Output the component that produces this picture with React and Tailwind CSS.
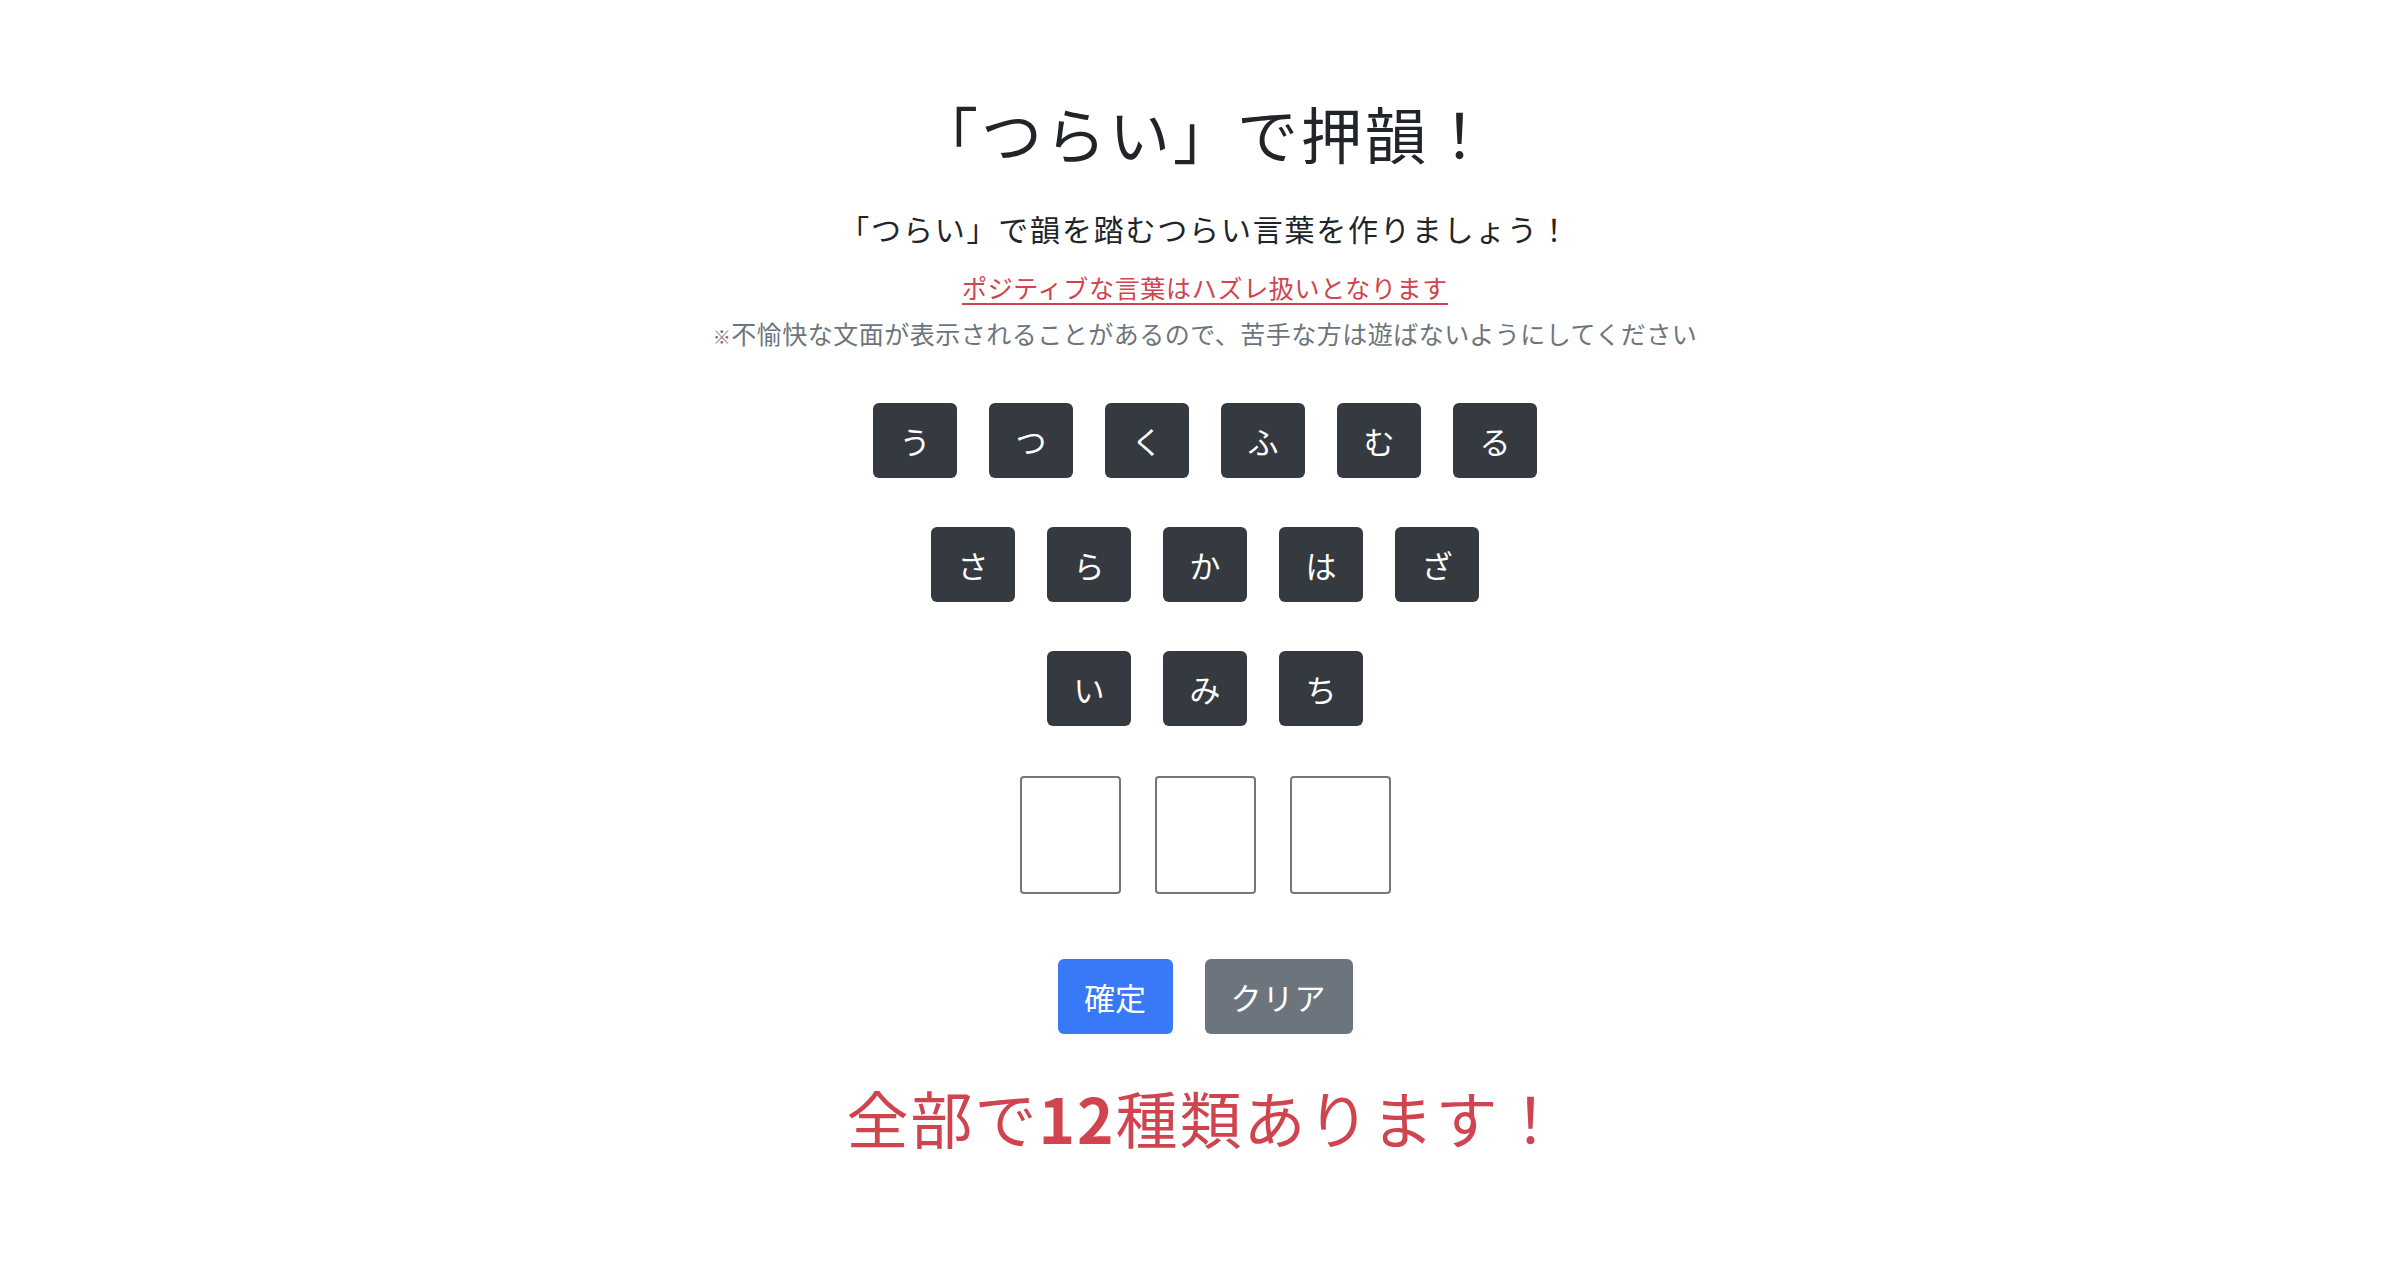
import React, { useState } from 'react';

const rows = [
  ['う', 'つ', 'く', 'ふ', 'む', 'る'],
  ['さ', 'ら', 'か', 'は', 'ざ'],
  ['い', 'み', 'ち'],
];

const App = () => {
  const [picked, setPicked] = useState(['', '', '']);

  const pick = (ch) => {
    const i = picked.indexOf('');
    if (i === -1) return;
    const next = [...picked];
    next[i] = ch;
    setPicked(next);
  };

  return (
    <div
      className="min-h-screen bg-white flex flex-col items-center pl-[10px] text-[#212529]"
      style={{ fontFamily: '"Noto Sans CJK JP", "Noto Sans", sans-serif' }}
    >
      {/* Header */}
      <h1 className="mt-[97px] text-[61px] leading-[72px] font-normal tracking-[3px]">「つらい」で押韻！</h1>
      <h5 className="mt-[41px] text-[30px] leading-[36px] font-normal tracking-[1.8px]">
        「つらい」で韻を踏むつらい言葉を作りましょう！
      </h5>
      <a
        href="#"
        className="mt-[23px] text-[25px] leading-[36px] tracking-[0.7px] text-[#cf444f] underline decoration-2 underline-offset-[5px]"
      >
        ポジティブな言葉はハズレ扱いとなります
      </a>
      <p className="mt-[10px] text-[25px] leading-[36px] tracking-[0.5px] text-[#6c757d]">
        <span className="text-[18px]">※</span>不愉快な文面が表示されることがあるので、苦手な方は遊ばないようにしてください
      </p>

      {/* Kana tiles */}
      <div className="mt-[49px] flex flex-col items-center gap-[49px]">
        {rows.map((row, r) => (
          <div key={r} className="flex gap-[32px]">
            {row.map((ch) => (
              <button
                key={ch}
                onClick={() => pick(ch)}
                className="w-[84px] h-[75px] rounded-[6px] bg-[#353a40] text-white text-[31px] leading-none flex items-center justify-center"
              >
                {ch}
              </button>
            ))}
          </div>
        ))}
      </div>

      {/* Answer slots */}
      <div className="mt-[50px] flex gap-[34px]">
        {picked.map((ch, i) => (
          <div
            key={i}
            className="w-[101px] h-[118px] border-2 border-[#767676] rounded-[4px] flex items-center justify-center text-[48px]"
          >
            {ch}
          </div>
        ))}
      </div>

      {/* Actions */}
      <div className="mt-[65px] flex gap-[32px]">
        <button className="w-[115px] h-[75px] rounded-[6px] bg-[#3779f6] text-white text-[31px] leading-none">
          確定
        </button>
        <button
          onClick={() => setPicked(['', '', ''])}
          className="w-[148px] h-[75px] rounded-[6px] bg-[#6c757d] text-white text-[31px] leading-none tracking-[1px]"
        >
          クリア
        </button>
      </div>

      <h1 className="mt-[47px] text-[62px] leading-[72px] font-normal tracking-[2px] text-[#cf444f]">
        全部で<span className="font-bold">12</span>種類あります！
      </h1>
    </div>
  );
};

export default App;
